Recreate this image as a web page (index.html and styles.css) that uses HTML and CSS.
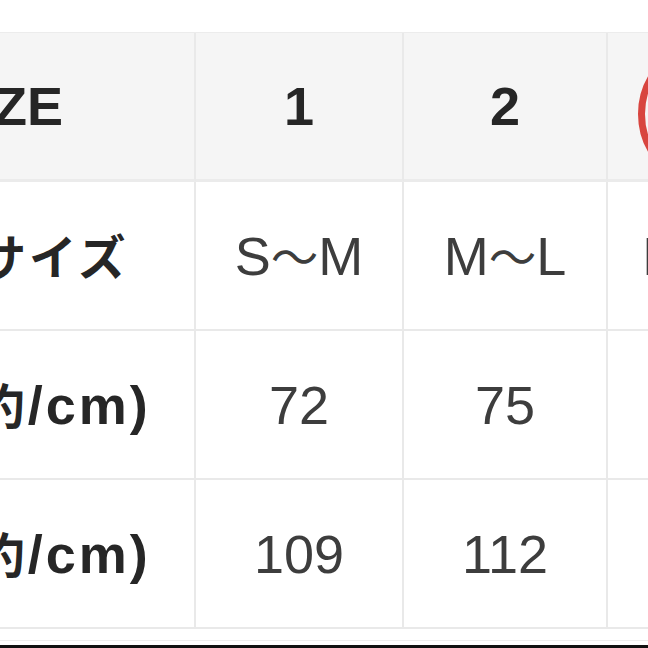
FILE: index.html
```html
<!DOCTYPE html>
<html lang="ja">
<head>
<meta charset="utf-8">
<title>サイズ表</title>
<link rel="stylesheet" href="styles.css">
</head>
<body>
<div class="page">
  <table class="size-table">
    <thead>
      <tr>
        <th class="label">SIZE</th>
        <th>1</th>
        <th>2</th>
        <th class="marked">3<span class="ring"></span></th>
      </tr>
    </thead>
    <tbody>
      <tr>
        <th class="label"><span class="ja">目安サイズ</span></th>
        <td>S<span class="ja">～</span>M</td>
        <td>M<span class="ja">～</span>L</td>
        <td>L<span class="ja">～</span>XL</td>
      </tr>
      <tr>
        <th class="label"><span class="ja">着丈</span>(<span class="ja">約</span>/cm)</th>
        <td>72</td>
        <td>75</td>
        <td>78</td>
      </tr>
      <tr>
        <th class="label"><span class="ja">身幅</span>(<span class="ja">約</span>/cm)</th>
        <td>109</td>
        <td>112</td>
        <td>115</td>
      </tr>
    </tbody>
  </table>
  <div class="page-end"></div>
</div>
<div class="bottom-bar"></div>
</body>
</html>
```

FILE: styles.css
```css
html, body {
  margin: 0;
  padding: 0;
  background: #ffffff;
  overflow: hidden;
  height: 648px;
}

body {
  display: flex;
  flex-direction: column;
  font-family: "Liberation Sans", "Noto Sans CJK JP", sans-serif;
}

.page {
  flex: 1;
  padding-top: 32px;
  overflow: hidden;
}

.size-table {
  margin-left: -188px;
  border-collapse: separate;
  border-spacing: 0;
  table-layout: fixed;
  width: 1010px;
  border-top: 1px solid #ececec;
}

.size-table th,
.size-table td {
  box-sizing: border-box;
  height: 149px;
  padding: 0;
  text-align: center;
  vertical-align: middle;
  font-size: 54px;
  line-height: 1;
  border-right: 2px solid #e9e9e9;
  border-bottom: 2px solid #e9e9e9;
  white-space: nowrap;
}

.size-table thead th {
  background: #f5f5f5;
  color: #262626;
  font-weight: 700;
  border-bottom: 3px solid #ebebeb;
}

.size-table tbody td {
  color: #3d3d3d;
  font-weight: 400;
  background: #ffffff;
}

.size-table tbody th {
  color: #262626;
  font-weight: 700;
  background: #ffffff;
  letter-spacing: 3px;
}

.size-table .label {
  width: 384px;
}

.size-table tr > :nth-child(2) {
  width: 208px;
}

.size-table tr > :nth-child(3) {
  width: 204px;
}

.size-table tr > :nth-child(4) {
  width: 214px;
}

.ja {
  font-family: "Noto Sans CJK JP", sans-serif;
  font-size: 0.88em;
}

.marked {
  position: relative;
}

.ring {
  position: absolute;
  left: 30px;
  top: 6px;
  width: 150px;
  height: 150px;
  box-sizing: border-box;
  border: 7px solid #d8453f;
  border-radius: 50%;
}

.page-end {
  height: 11px;
  border-bottom: 1px solid #eeeeee;
}

.bottom-bar {
  height: 3px;
  background: #111111;
  flex: none;
}
```
